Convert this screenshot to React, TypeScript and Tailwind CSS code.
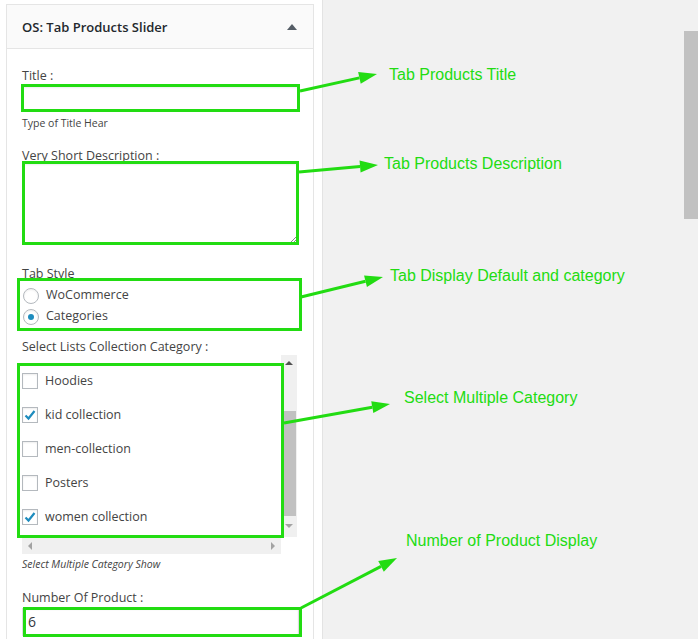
import React from "react";

const categories = [
  { name: "Hoodies", checked: false },
  { name: "kid collection", checked: true },
  { name: "men-collection", checked: false },
  { name: "Posters", checked: false },
  { name: "women collection", checked: true },
];

const notes = [
  { text: "Tab Products Title", cls: "left-[389px] top-[65px]" },
  { text: "Tab Products Description", cls: "left-[384px] top-[154px]" },
  { text: "Tab Display Default and category", cls: "left-[390px] top-[266px]" },
  { text: "Select Multiple Category", cls: "left-[404px] top-[388px]" },
  { text: "Number of Product Display", cls: "left-[406px] top-[531px]" },
];

const arrows = [
  [300, 91, 377, 74],
  [299, 172, 378, 165],
  [301, 297, 383, 277],
  [284, 423, 390, 404],
  [301, 608, 397, 558],
];

function Check({ on }: { on: boolean }) {
  return (
    <span className="w-4 h-4 border border-[#b4b9be] bg-white shadow-[inset_0_1px_2px_rgba(0,0,0,0.07)] flex items-center justify-center">
      {on && (
        <svg width="14" height="14" viewBox="0 0 14 14">
          <path d="M2.5 7.5 L5.5 10.5 L11.5 3" fill="none" stroke="#1e8cbe" strokeWidth="2.2" />
        </svg>
      )}
    </span>
  );
}

function Radio({ on }: { on: boolean }) {
  return (
    <span className="w-4 h-4 rounded-full border border-[#b4b9be] bg-white flex items-center justify-center shadow-[inset_0_1px_2px_rgba(0,0,0,0.07)]">
      {on && <span className="w-[6px] h-[6px] rounded-full bg-[#1e8cbe]" />}
    </span>
  );
}

function Arrow({ a }: { a: number[] }) {
  const [x1, y1, x2, y2] = a;
  const dx = x2 - x1, dy = y2 - y1;
  const len = Math.hypot(dx, dy);
  const ux = dx / len, uy = dy / len;
  const bx = x2 - ux * 18, by = y2 - uy * 18;
  const px = -uy * 6, py = ux * 6;
  return (
    <g>
      <line x1={x1} y1={y1} x2={bx} y2={by} stroke="#22dc12" strokeWidth="3" />
      <polygon points={`${x2},${y2} ${bx + px},${by + py} ${bx - px},${by - py}`} fill="#22dc12" />
    </g>
  );
}

export default function App() {
  return (
    <div className="relative w-[698px] h-[639px] overflow-hidden flex text-[12.5px] text-[#444] font-['Open_Sans',sans-serif]">
      <div className="w-[322px] bg-white pl-[6px] pt-[4px]">
        <div className="w-[308px] h-[700px] border border-[#e5e5e5] bg-white">
          <div className="h-[44px] bg-[#fafafa] border-b border-[#e5e5e5] flex items-center justify-between pl-[15px] pr-[16px] pt-[2px]">
            <span className="font-semibold text-[13px] text-[#23282d]">OS: Tab Products Slider</span>
            <svg width="10" height="6" viewBox="0 0 10 6" className="mb-[2px]">
              <polygon points="5,0 10,6 0,6" fill="#555d66" />
            </svg>
          </div>
          <div className="pl-[15px] pr-[15px] pt-[18px] flex flex-col">
            <label className="leading-[18px]">Title :</label>
            <div className="mt-[1px] h-[25px] w-[277px] border border-[#ddd] shadow-[inset_0_1px_2px_rgba(0,0,0,0.07)]" />
            <p className="mt-[6px] text-[10.5px] leading-[13px]">Type of Title Hear</p>
            <label className="mt-[17px] leading-[18px]">Very Short Description :</label>
            <div className="relative mt-[-2px] h-[82px] w-[276px] border border-[#ddd] shadow-[inset_0_1px_2px_rgba(0,0,0,0.07)]">
              <svg className="absolute right-[1px] bottom-[1px]" width="7" height="7" viewBox="0 0 7 7">
                <path d="M1 7 L7 1 M4 7 L7 4" stroke="#888" strokeWidth="1" />
              </svg>
            </div>
            <label className="mt-[20px] leading-[18px]">Tab Style</label>
            <div className="flex items-center gap-[7px] h-[21px] mt-[2px] pl-[1px]">
              <Radio on={false} />
              <span>WoCommerce</span>
            </div>
            <div className="flex items-center gap-[7px] h-[21px] pl-[1px]">
              <Radio on={true} />
              <span>Categories</span>
            </div>
            <label className="mt-[11px] leading-[18px]">Select Lists Collection Category :</label>
            <div className="grid grid-cols-[259px_16px] grid-rows-[182px_17px] w-[275px] mt-[-1px]">
              <div className="pt-[9px] overflow-hidden">
                {categories.map((c) => (
                  <div key={c.name} className="h-[34px] flex items-center gap-[7px]">
                    <Check on={c.checked} />
                    <span>{c.name}</span>
                  </div>
                ))}
              </div>
              <div className="bg-[#f0f0f0] flex flex-col items-center">
                <svg className="mt-[6px]" width="8" height="4" viewBox="0 0 8 4">
                  <polygon points="4,0 8,4 0,4" fill="#505050" />
                </svg>
                <div className="mt-[46px] w-[14px] h-[105px] bg-[#c1c1c1]" />
                <svg className="mt-[8px]" width="8" height="4" viewBox="0 0 8 4">
                  <polygon points="0,0 8,0 4,4" fill="#a3a3a3" />
                </svg>
              </div>
              <div className="bg-[#f0f0f0] flex items-center justify-between px-[6px]">
                <svg width="4" height="8" viewBox="0 0 4 8">
                  <polygon points="4,0 4,8 0,4" fill="#a3a3a3" />
                </svg>
                <svg width="4" height="8" viewBox="0 0 4 8">
                  <polygon points="0,0 0,8 4,4" fill="#a3a3a3" />
                </svg>
              </div>
              <div className="bg-white" />
            </div>
            <p className="mt-[4px] text-[10.5px] italic leading-[13px]">Select Multiple Category Show</p>
            <label className="mt-[18px] leading-[18px]">Number Of Product :</label>
            <div className="mt-[1px] h-[28px] w-[277px] border border-[#ddd] flex items-center pl-[5px] pb-[2px] text-[14px] text-[#32373c] shadow-[inset_0_1px_2px_rgba(0,0,0,0.07)]">
              6
            </div>
          </div>
        </div>
      </div>
      <div className="flex-1 bg-[#f1f1f1] border-l border-[#e3e3e3]" />

      <div className="absolute left-[684px] top-[31px] w-[14px] h-[188px] bg-[#c1c1c1]" />

      <div className="absolute left-[21px] top-[84px] w-[279px] h-[28px] border-[3px] border-[#22dc12]" />
      <div className="absolute left-[22px] top-[161px] w-[277px] h-[84px] border-[3px] border-[#22dc12]" />
      <div className="absolute left-[17px] top-[278px] w-[285px] h-[53px] border-[3px] border-[#22dc12]" />
      <div className="absolute left-[17px] top-[363px] w-[267px] h-[175px] border-[3px] border-[#22dc12]" />
      <div className="absolute left-[23px] top-[607px] w-[279px] h-[30px] border-[3px] border-[#22dc12]" />

      <svg className="absolute left-0 top-0 pointer-events-none" width="698" height="639">
        {arrows.map((a, i) => (
          <Arrow key={i} a={a} />
        ))}
      </svg>

      {notes.map((n) => (
        <span key={n.text} className={`absolute ${n.cls} text-[16px] leading-[20px] text-[#22dc12] font-['Liberation_Sans',Arial,sans-serif] whitespace-nowrap`}>
          {n.text}
        </span>
      ))}
    </div>
  );
}
